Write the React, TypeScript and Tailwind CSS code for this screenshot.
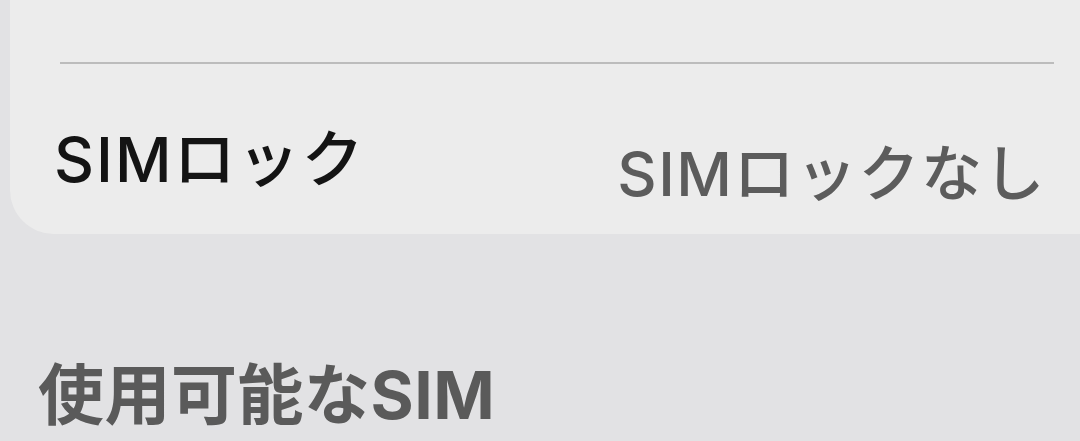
const font = "font-['Inter','Noto_Sans_CJK_JP',sans-serif]";

export default function App() {
  return (
    <div
      className={`h-[441px] w-[1080px] overflow-hidden bg-[#e2e2e4] ${font}`}
    >
      {/* settings group card, top part clipped */}
      <section className="ml-[10px] h-[234px] rounded-bl-[44px] bg-[#ececec] pt-[62px]">
        <div className="ml-[50px] mr-[26px] h-[2px] bg-[#bcbcbc]" />
        <div className="flex items-center justify-between pl-[44px] pr-[34px] pt-[50px]">
          <span className="text-[62px] font-medium leading-none tracking-[2px] text-[#141414]">
            SIMロック
          </span>
          <span className="mt-[30px] text-[61px] font-medium leading-none tracking-[1.5px] text-[#5c5c5c]">
            SIMロックなし
          </span>
        </div>
      </section>

      <h2 className="pl-[38px] pt-[128px] text-[66px] font-bold leading-none tracking-[0.5px] text-[#5a5a5a]">
        使用可能なSIM
      </h2>
    </div>
  );
}
